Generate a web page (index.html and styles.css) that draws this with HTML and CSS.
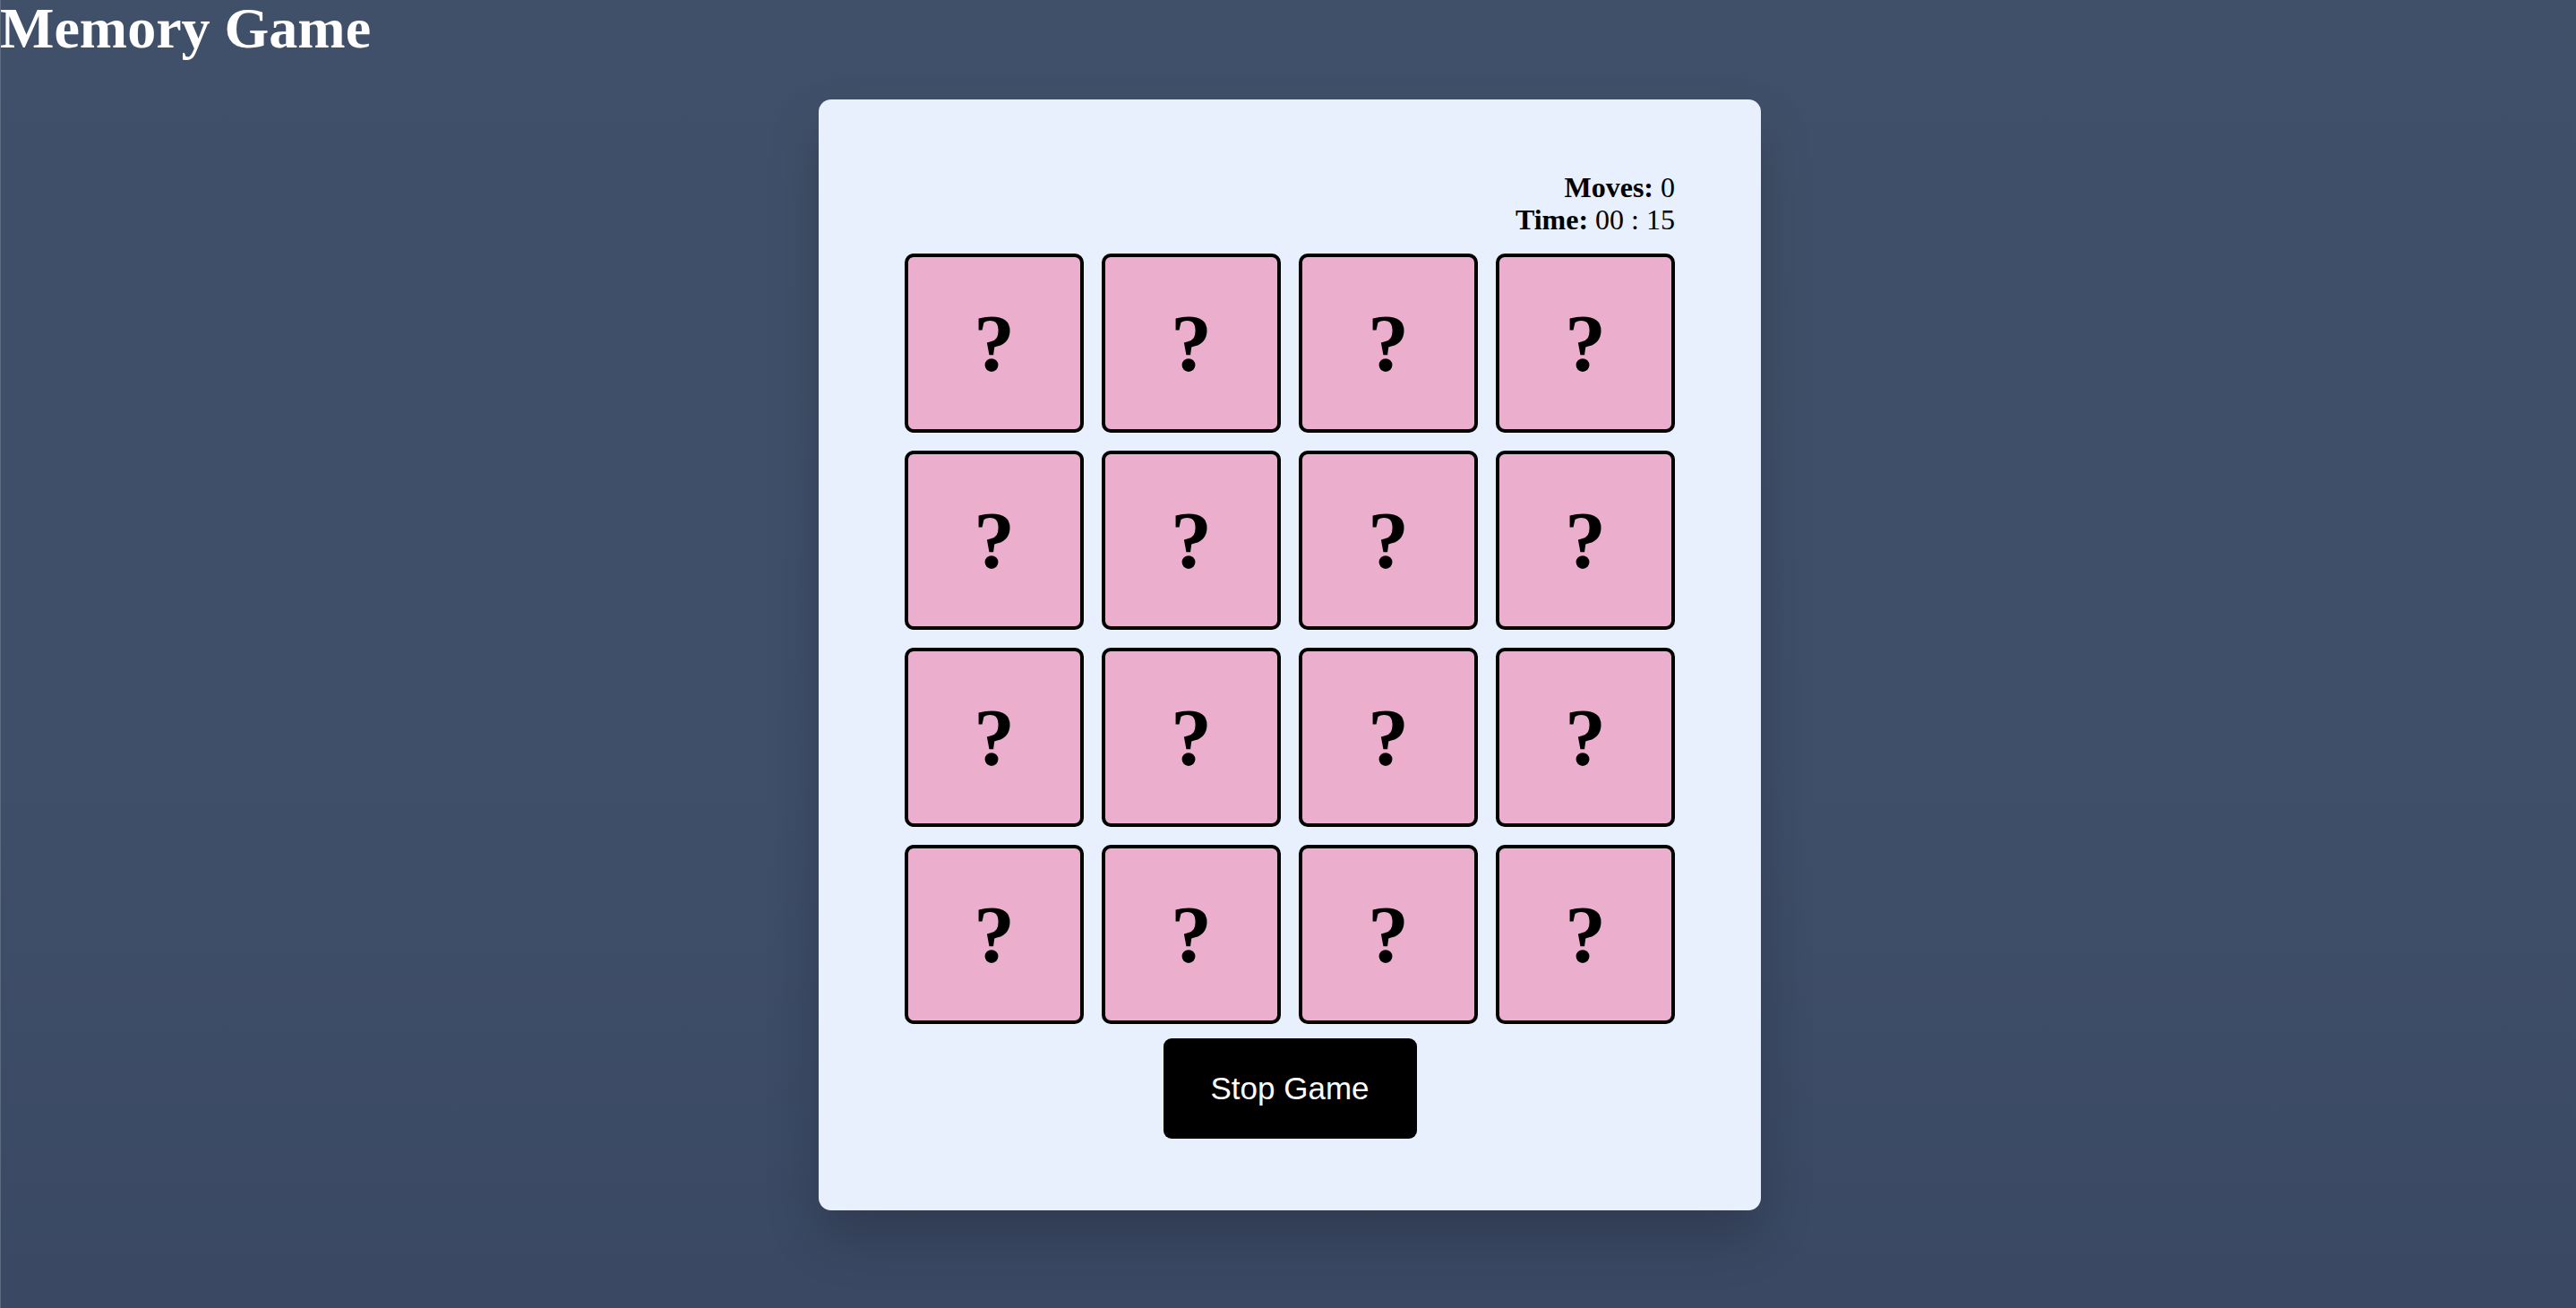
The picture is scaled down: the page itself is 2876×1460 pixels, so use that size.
FILE: index.html
```html
<!DOCTYPE html>
<html lang="en">
<head>
<meta charset="utf-8">
<title>Memory Game</title>
<link rel="stylesheet" href="styles.css">
</head>
<body>
  <h1 class="title">Memory Game</h1>
  <main class="page">
    <section class="game">
      <div class="stats">
        <div><strong>Moves:</strong> 0</div>
        <div><strong>Time:</strong> 00 : 15</div>
      </div>
      <div class="grid">
        <div class="card">?</div><div class="card">?</div><div class="card">?</div><div class="card">?</div>
        <div class="card">?</div><div class="card">?</div><div class="card">?</div><div class="card">?</div>
        <div class="card">?</div><div class="card">?</div><div class="card">?</div><div class="card">?</div>
        <div class="card">?</div><div class="card">?</div><div class="card">?</div><div class="card">?</div>
      </div>
      <button class="stop">Stop Game</button>
    </section>
  </main>
</body>
</html>
```
FILE: styles.css
```css
html, body {
  margin: 0;
  padding: 0;
}
body {
  min-height: 100vh;
  background: linear-gradient(180deg, #415069 0%, #3f4e69 60%, #3a4863 100%);
  font-family: "Liberation Serif", "Times New Roman", serif;
  color: #000;
  border-left: 1px solid #5d6a80;
  box-sizing: border-box;
}
.title {
  margin: 0;
  font-size: 64px;
  line-height: 64px;
  font-weight: bold;
  color: #ffffff;
  margin-left: -1px;
}
.page {
  display: flex;
  justify-content: center;
  padding-top: 47px;
  padding-left: 3px;
}
.game {
  box-sizing: border-box;
  width: 1052px;
  padding: 80px 96px;
  background: #e8effd;
  border-radius: 14px;
  box-shadow: 0 30px 60px rgba(0, 0, 0, 0.2);
  display: flex;
  flex-direction: column;
  align-items: center;
}
.stats {
  align-self: stretch;
  text-align: right;
  font-size: 32px;
  line-height: 36px;
  margin-bottom: 20px;
}
.grid {
  display: grid;
  grid-template-columns: repeat(4, 200px);
  grid-auto-rows: 200px;
  gap: 20px;
}
.card {
  box-sizing: border-box;
  border: 4px solid #000;
  border-radius: 10px;
  background: #ebafcd;
  display: flex;
  align-items: center;
  justify-content: center;
  font-size: 92px;
  font-weight: bold;
  line-height: 1;
}
.stop {
  margin-top: 16px;
  width: 283px;
  height: 112px;
  border: none;
  border-radius: 9px;
  background: #000;
  color: #fff;
  font-family: "Liberation Sans", Arial, sans-serif;
  font-size: 35px;
  cursor: pointer;
}
```
